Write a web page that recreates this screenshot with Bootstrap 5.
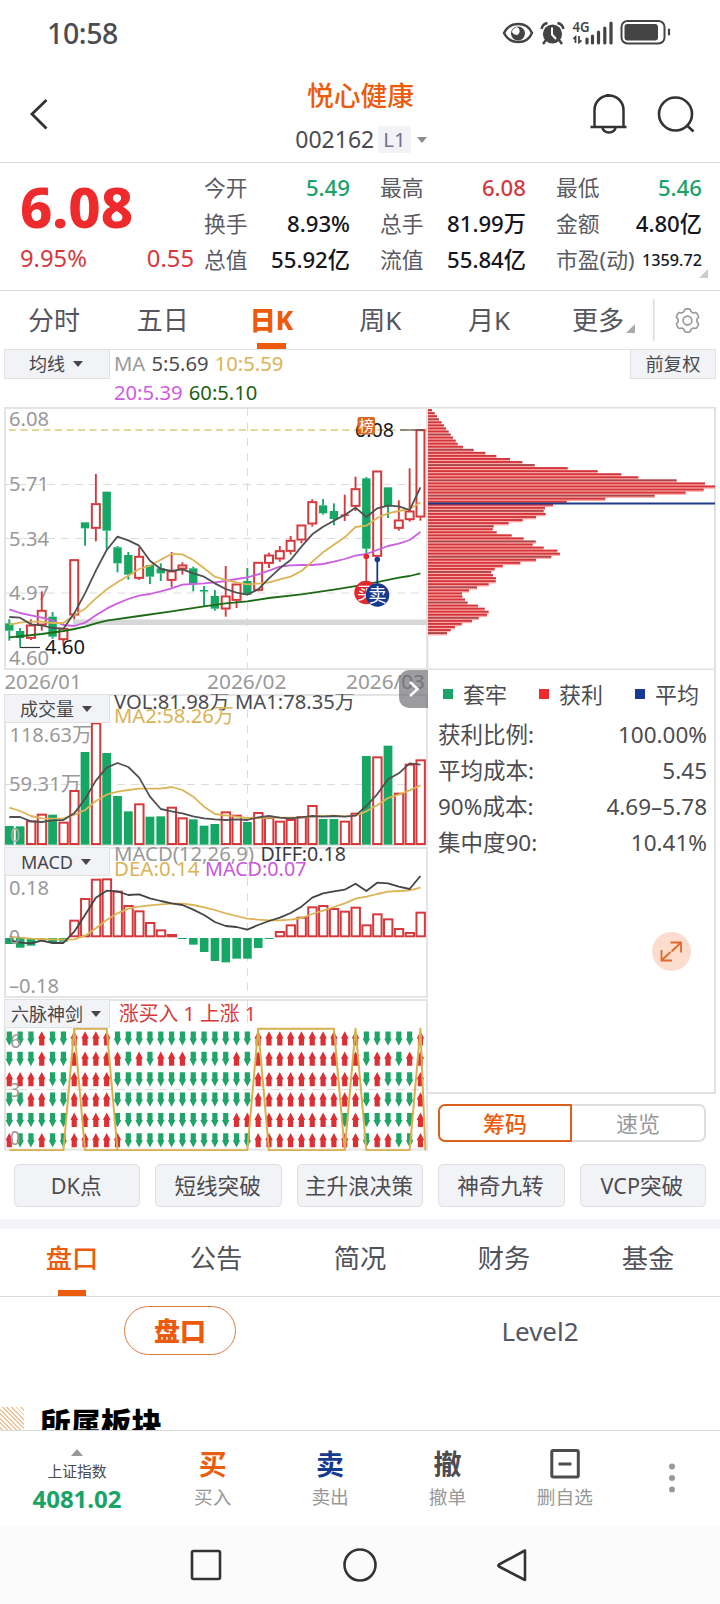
<!DOCTYPE html>
<html lang="zh-CN">
<head>
<meta charset="utf-8">
<meta name="viewport" content="width=device-width, initial-scale=1">
<title>悦心健康 002162</title>
<link href="https://cdn.jsdelivr.net/npm/bootstrap@5.3.0/dist/css/bootstrap.min.css" rel="stylesheet">
<script src="https://cdn.jsdelivr.net/npm/bootstrap@5.3.0/dist/js/bootstrap.bundle.min.js"></script>
<style>
:root{--brand:#ec5b0b;--up:#d6393c;--down:#19a366;--rule:#e1e1e1;--soft:#f2f3f7;--ink:#4c4c50}
body{font-family:"Noto Sans","Noto Sans CJK SC",sans-serif;color:var(--ink);background:#fff;line-height:1;width:720px;height:1604px;overflow:hidden}
svg{display:block}
svg text{font-family:"Noto Sans","Noto Sans CJK SC",sans-serif}
.c-brand{color:var(--brand)}.c-up{color:var(--up)}.c-down{color:var(--down)}
.line-b{border-bottom:1px solid #dadada}
.status{height:66px;padding:0 48px 0 47px}
.clock{font-size:28.5px;font-weight:500;letter-spacing:-.4px}
.head{height:97px;padding:0 24px 0 28px}
.stock-name{font-size:26.8px;font-weight:500;margin:1px 3px 0 0}
.stock-code{font-size:23px;height:28px;margin-top:16px;margin-left:-2px}
.lvl{background:var(--soft);color:#76728f;font-size:20.5px;padding:3px 5px;margin-left:4px;height:27px;border-radius:2px}
.caret{width:0;height:0;border:5.5px solid transparent;border-top:6px solid #8b8b8b;border-bottom:0}
.stock-code .caret{margin-left:6px}
.quote{height:128px;position:relative}
.price-box{width:204px;padding:19px 0 0 20px}
.price{font-size:56px;font-weight:800;color:#ee2a2c;line-height:48px}
.chg{font-size:23.8px;margin-top:17px;width:174px}
.qcol{width:145px;margin-right:31px;padding-top:7px}
.qcol>div{height:36px;font-size:21.8px;color:#5b5b63}
.qcol b{font-weight:500;color:#16161e;font-size:22.2px;margin-right:-1px}
.qcol b.c-down{color:var(--down)}.qcol b.c-up{color:var(--up)}
.qcol b.pe{font-size:16.2px}
.corner{position:absolute;right:12px;bottom:12px}
.periods{height:58px;font-size:26px;color:#55565e}
.periods>.tabx{width:108.8px;height:58px;position:relative;padding-right:1px}
.tabx.on:after,.info>.on:after{content:"";position:absolute;bottom:0;width:29px;height:6px;background:var(--brand);left:50%;margin-left:-14.5px}
.tabx.on{color:var(--brand);font-weight:800}
.more-mark{position:absolute;right:18px;bottom:16px}
.chart-zone{margin:0 4px;height:801px}
.ma-bar{height:58px;border-top:1.5px solid var(--rule)}
.ind{width:106px;height:29px;background:var(--soft);border:1.5px solid var(--rule);font-size:18px;color:#46464c;padding-right:2px}
.ind .caret{border-top-color:#46464c;margin-left:8px;border-width:6px 5.5px 0}
.panelx{position:relative}
.panelx>.ind{position:absolute;left:0;top:0}
.ma{font-size:20.2px;line-height:29px;margin:-1px 0 0 4px;word-spacing:1px}
.adj{height:29px;width:86px;background:var(--soft);border:1.5px solid var(--rule);border-top:0;font-size:18.3px}
.left-col{width:424px}.right-col{width:288px;height:687px;border-right:2px solid var(--rule);border-bottom:2px solid var(--rule)}
.expander{position:absolute;right:0;top:263px;width:29px;height:38px;border-radius:10px 0 0 10px;background:rgba(98,99,106,.64);z-index:2}
.legendx{height:47px;padding:0 15px 0 15px;font-size:22px}
.sw{width:10px;height:10px;margin-right:10px}
.kv{height:36px;padding:0 7px 0 10px;font-size:22.5px}
.zoomer{width:39px;height:39px;border-radius:50%;background:#fcdccd;margin:71px 0 0 224px}
.toggle{margin:10px 10px 0 10px;font-size:22px}
.toggle>div{height:38px;border:2px solid #dedede}
.toggle .a{width:134px;border:2px solid #d9621f;border-radius:7px 0 0 7px;color:var(--brand);font-weight:500}
.toggle .b{width:134px;border-left:0;border-radius:0 7px 7px 0;color:#999}
.strategies{height:69px;gap:15px;padding:14px 14px 12px}
.strategies>div{height:43px;background:var(--soft);border:1.5px solid #dfdfe2;border-radius:5px;font-size:21.6px;flex:1 1 0;white-space:nowrap;padding-right:2px}
.band{height:10px;background:var(--soft)}
.info{height:68px;font-size:26.3px;color:#515259}
.info>div{height:58px;position:relative}
.info>.on:after{bottom:-9px;width:28px;margin-left:-14px}
.pill{width:112px;height:49px;border:1.5px solid #e07a42;border-radius:25px;font-size:26px;font-weight:800;color:var(--brand)}
.level{font-size:26px;color:#55565e}
.sector{height:24px;margin-top:52px;overflow:hidden;border-bottom:1px solid #dadada}
.hatch{width:24px;height:24px;background:repeating-linear-gradient(45deg,#fff 0 2px,#efc49a 2px 3.2px)}
.sector h2{font-size:30.5px;font-weight:900;color:#000;margin:1px 0 0 16px;line-height:30px;white-space:nowrap}
.trade{height:95px}
.trade .it{width:117.4px;padding-top:17px}
.trade .big{font-size:28px;font-weight:700;height:32px;line-height:32px}
.trade .sub{font-size:18.7px;color:#989898;margin-top:8px}
.idx{width:154px;padding-top:18px}
.idx .nm{font-size:14.8px;margin-top:8px}.idx .vl{font-size:24px;margin-top:8px}
.sysnav{height:79px;background:#fbfbfb}
</style>
</head>
<body>
<div class="status d-flex align-items-center justify-content-between">
  <div class="clock">10:58</div>
  <svg width="172" height="28" viewBox="500 19 172 28">
    <path d="M504 33c6-12 23-12 28 0c-5 12-22 12-28 0z" fill="none" stroke="#444" stroke-width="2.4"/>
    <circle cx="518" cy="33.5" r="7" fill="#444"/><path d="M517 27c4 2 3 7 0 8c-2 0-4-1-5-3c0-2 2-4 5-5z" fill="#fff"/>
    <circle cx="552.5" cy="34" r="9.6" fill="#444"/><path d="M541.5 29q1-5 6-6M563.500 29q-1-5-6-6M546 40l-3 4M559 40l3 4" stroke="#444" stroke-width="2.5" fill="none"/><path d="M552 27.500v7l4 4.500" stroke="#fff" stroke-width="2" fill="none"/>
    <text x="572.500" y="32" font-size="14" font-weight="600" fill="#444" textLength="17" lengthAdjust="spacingAndGlyphs">4G</text>
    <path d="M575.500 43v-6l-2 2M579 36v6.500l2.500-2" stroke="#444" stroke-width="1.800" fill="none"/>
    <path d="M587 43v-4M592.500 43v-7M598.500 43v-11M604.800 43v-15M611 43v-20" stroke="#444" stroke-width="3.200" stroke-linecap="round"/>
    <rect x="621.500" y="21" width="43" height="22.500" rx="6" fill="none" stroke="#444" stroke-width="2"/><rect x="624.500" y="24" width="33.500" height="16.500" rx="3" fill="#444"/><path d="M669 29.500v5" stroke="#444" stroke-width="2.200" stroke-linecap="round"/>
  </svg>
</div>
<div class="head line-b d-flex justify-content-between">
  <svg class="flex-shrink-0" width="108" height="95" viewBox="28 66 108 95"><path d="M46.500 100L32 114l14.500 14.500" fill="none" stroke="#333" stroke-width="2.800"/></svg>
  <div class="d-flex flex-column align-items-center pt-3">
    <div class="stock-name c-brand">悦心健康</div>
    <div class="stock-code d-flex align-items-center">002162<span class="lvl">L1</span><i class="caret"></i></div>
  </div>
  <svg class="flex-shrink-0" width="108" height="95" viewBox="588 66 108 95" fill="none" stroke="#333" stroke-width="2.600">
    <path d="M594.500 127v-17a14.500 14.500 0 0 1 29 0v17M590.500 127h36M602.500 127.500a6.500 5 0 0 0 13 0M609 94v3" stroke-width="2.500"/><path d="M608 94v2" stroke-width="4"/>
    <circle cx="675.500" cy="114" r="16.500"/><path d="M686.500 125l7 6.500"/>
  </svg>
</div>
<div class="quote line-b d-flex">
  <div class="price-box flex-shrink-0"><div class="price">6.08</div><div class="chg c-up d-flex justify-content-between"><span>9.95%</span><span>0.55</span></div></div>
  <div class="qcol flex-shrink-0"><div class="d-flex justify-content-between align-items-center">今开<b class="c-down">5.49</b></div><div class="d-flex justify-content-between align-items-center">换手<b>8.93%</b></div><div class="d-flex justify-content-between align-items-center">总值<b>55.92亿</b></div></div>
  <div class="qcol flex-shrink-0"><div class="d-flex justify-content-between align-items-center">最高<b class="c-up">6.08</b></div><div class="d-flex justify-content-between align-items-center">总手<b>81.99万</b></div><div class="d-flex justify-content-between align-items-center">流值<b>55.84亿</b></div></div>
  <div class="qcol flex-shrink-0 me-0"><div class="d-flex justify-content-between align-items-center">最低<b class="c-down">5.46</b></div><div class="d-flex justify-content-between align-items-center">金额<b>4.80亿</b></div><div class="d-flex justify-content-between align-items-center">市盈(动)<b class="pe">1359.72</b></div></div>
  <svg class="corner" width="9" height="9"><path d="M9 0v9H0z" fill="#ccc"/></svg>
</div>
<div class="periods d-flex">
  <div class="tabx d-flex align-items-center justify-content-center">分时</div><div class="tabx d-flex align-items-center justify-content-center">五日</div><div class="tabx on d-flex align-items-center justify-content-center">日K</div><div class="tabx d-flex align-items-center justify-content-center">周K</div><div class="tabx d-flex align-items-center justify-content-center">月K</div>
  <div class="tabx d-flex align-items-center justify-content-center">更多<svg class="more-mark" width="9" height="9"><path d="M9 0v9H0z" fill="#aaa"/></svg></div>
  <svg width="66" height="58" viewBox="653 291 66 58" fill="none" stroke="#999" stroke-width="1.600"><path d="M653.800 299v42" stroke="#ddd"/><circle cx="687.500" cy="320.500" r="4.400"/><path id="gear" stroke-linejoin="round"/></svg>
</div>
<div class="chart-zone">
  <div class="ma-bar d-flex">
    <div class="ind border-top-0 d-flex align-items-center justify-content-center">均线<i class="caret"></i></div>
    <div class="ma flex-grow-1"><span style="color:#999">MA</span> 5:5.69 <span style="color:#dab358">10:5.59</span><br><span style="color:#cf5be0">20:5.39</span> <span style="color:#1c5f12">60:5.10</span></div>
    <div class="adj d-flex align-items-center justify-content-center">前复权</div>
  </div>
  <div class="d-flex">
    <div class="left-col">
      <div class="panelx"><svg id="k" width="424" height="287" viewBox="4 407 424 287"></svg>
        <div class="expander d-flex align-items-center justify-content-center"><svg width="12" height="18"><path d="M2 2l7.500 7L2 16" stroke="#fff" stroke-width="2.500" fill="none"/></svg></div></div>
      <div class="panelx"><svg id="vol" width="424" height="153" viewBox="4 694 424 153"></svg><div class="ind d-flex align-items-center justify-content-center">成交量<i class="caret"></i></div></div>
      <div class="panelx"><svg id="macd" width="424" height="152" viewBox="4 847 424 152"></svg><div class="ind d-flex align-items-center justify-content-center">MACD<i class="caret"></i></div></div>
      <div class="panelx"><svg id="six" width="424" height="152" viewBox="4 999 424 152"></svg><div class="ind d-flex align-items-center justify-content-center">六脉神剑<i class="caret"></i></div></div>
    </div>
    <div>
      <div class="right-col">
        <svg id="chips" width="288" height="263" viewBox="428 407 288 263"></svg>
        <div class="legendx d-flex justify-content-between align-items-center">
          <span class="d-flex align-items-center"><i class="sw" style="background:#19a366"></i>套牢</span><span class="d-flex align-items-center"><i class="sw" style="background:#ee2a2c"></i>获利</span><span class="d-flex align-items-center"><i class="sw" style="background:#163a96"></i>平均</span>
        </div>
        <div class="kv d-flex justify-content-between align-items-center"><span>获利比例:</span><span>100.00%</span></div>
        <div class="kv d-flex justify-content-between align-items-center"><span>平均成本:</span><span>5.45</span></div>
        <div class="kv d-flex justify-content-between align-items-center"><span>90%成本:</span><span>4.69–5.78</span></div>
        <div class="kv d-flex justify-content-between align-items-center"><span>集中度90:</span><span>10.41%</span></div>
        <div class="zoomer"><svg width="39" height="39" fill="none" stroke="#e0692a" stroke-width="1.800"><path d="M18.500 10.500h10.500v10M28.500 11l-9 8.500M9.500 18v10.500h10.500M10 28l8.500-8"/></svg></div>
      </div>
      <div class="toggle d-flex"><div class="a d-flex align-items-center justify-content-center">筹码</div><div class="b d-flex align-items-center justify-content-center">速览</div></div>
    </div>
  </div>
</div>
<div class="strategies d-flex"><div class="d-flex align-items-center justify-content-center">DK点</div><div class="d-flex align-items-center justify-content-center">短线突破</div><div class="d-flex align-items-center justify-content-center">主升浪决策</div><div class="d-flex align-items-center justify-content-center">神奇九转</div><div class="d-flex align-items-center justify-content-center">VCP突破</div></div>
<div class="band"></div>
<div class="info line-b d-flex text-center"><div class="col on c-brand fw-medium d-flex align-items-center justify-content-center">盘口</div><div class="col d-flex align-items-center justify-content-center">公告</div><div class="col d-flex align-items-center justify-content-center">简况</div><div class="col d-flex align-items-center justify-content-center">财务</div><div class="col d-flex align-items-center justify-content-center">基金</div></div>
<div class="d-flex" style="padding-top:9px"><div class="w-50 d-flex justify-content-center"><div class="pill d-flex align-items-center justify-content-center">盘口</div></div><div class="level w-50 d-flex align-items-center justify-content-center">Level2</div></div>
<div class="sector d-flex"><div class="hatch"></div><h2>所属板块</h2></div>
<div class="trade d-flex">
  <div class="idx d-flex flex-column align-items-center"><svg width="12" height="7"><path d="M6 0l6 7H0z" fill="#999"/></svg><div class="nm">上证指数</div><div class="vl c-down fw-bold">4081.02</div></div>
  <div class="it text-center"><div class="big" style="color:#e8600f">买</div><div class="sub">买入</div></div>
  <div class="it text-center"><div class="big" style="color:#163a8e">卖</div><div class="sub">卖出</div></div>
  <div class="it text-center"><div class="big">撤</div><div class="sub">撤单</div></div>
  <div class="it text-center"><div class="big d-flex justify-content-center"><svg width="30" height="32" fill="none" stroke="#4c4c50"><rect x="1.800" y="2.500" width="26.500" height="26.500" rx="1.500" stroke-width="3"/><path d="M8.500 16h13" stroke-width="3"/></svg></div><div class="sub">删自选</div></div>
  <svg width="95" height="95" viewBox="624 1431 95 95" fill="#999"><circle cx="672" cy="1466.500" r="3"/><circle cx="672" cy="1478" r="3"/><circle cx="672" cy="1489.500" r="3"/></svg>
</div>
<div class="sysnav"><svg width="720" height="79" viewBox="0 1526 720 79" fill="none" stroke="#333" stroke-width="2.600"><rect x="192" y="1551" width="28" height="28" rx="1.500"/><circle cx="360" cy="1565" r="15.500"/><path d="M525 1550.500v29.500L499 1566.500q-1.500-1 0-2z" stroke-linejoin="round"/></svg></div>
<script>
const RED='#d6393c',GREEN='#16a765',GRID='#dcdcdc',X=i=>9.3+i*10.82;
const $=id=>document.getElementById(id);
const rect=(x,y,w,h,f,s)=>`<rect x="${x}" y="${y}" width="${w}" height="${h}" fill="${f}"${s?` stroke="${s}" stroke-width="2"`:''}/>`;
const seg=(x1,y1,x2,y2,c,w,d)=>`<path d="M${x1} ${y1}L${x2} ${y2}" stroke="${c}" stroke-width="${w||1}"${d?' stroke-dasharray="'+d+'"':''} fill="none"/>`;
const txt=(x,x2,y,s,c,z)=>`<text x="${x}" y="${y}" font-size="${z||20}" fill="${c}"${x2?` textLength="${x2-x}" lengthAdjust="spacingAndGlyphs"`:''}>${s}</text>`;
const poly=(a,o,c,w)=>`<polyline fill="none" stroke="${c}" stroke-width="${w||1.8}" stroke-linejoin="round" points="${a.map(p=>X(p[0])+','+(o+p[1]/3)).join(' ')}"/>`;
const line=(a,o,c)=>poly(a.map((v,i)=>[i,v]),o,c);
const G='#999';
/* candles: direction, body top, body bottom, high, low in thirds of a pixel below y=400 */
const K=[[0,670,692,658,722],[0,693,714,684,742],[1,674,716,658,720],[1,630,676,574,692],[0,650,710,636,716],[1,684,720,684,738],[1,478,646,478,658],[0,367,385,367,437],[1,310,386,222,424],[0,275,392,275,448],[0,442,490,438,517],[0,465,524,456,539],[1,468,536,442,540],[0,495,530,495,552],[0,505,520,490,543],[1,512,542,456,562],[1,494,508,487,524],[0,505,552,500,574],[0,570,573,558,620],[0,588,626,570,632],[1,587,628,498,650],[1,551,602,551,624],[0,543,584,504,584],[1,486,572,486,574],[1,464,491,458,504],[1,451,478,438,485],[1,420,455,408,464],[1,374,421,374,430],[1,304,373,298,380],[0,316,340,297,344],[0,333,357,310,376],[1,343,347,284,363],[1,265,320,230,333],[0,235,446,231,460],[1,212,470,212,470],[0,262,318,262,354],[1,359,386,301,392],[1,332,360,205,365],[1,88,352,88,362]];
let s=rect(5,408,422,261,'none','#e4e4e4')+[484.5,538.5,593].map(y=>seg(5,y,427,y,GRID,1,'8 6')).join('')+seg(247.5,408,247.5,669,GRID,1,'8 7')+seg(9,430,427,430,'#e3d79a',1.8,'7 4.500');
s+=rect(73,619.5,355,5.5,'#d8d8d8');
s+=[['6.08',426],['5.71',491],['5.34',545.5],['4.97',600],['4.60',665]].map(a=>txt(9,49,a[1],a[0],G)).join('');
K.forEach((k,i)=>{const x=X(i),t=400+k[1]/3,b=400+k[2]/3,h=400+k[3]/3,l=400+k[4]/3,c=k[0]?RED:GREEN;
 s+=seg(x,h,x,t,c,1.9)+seg(x,b,x,l,c,1.9)+(k[0]?(b-t<3?rect(x-4,t,8,1.6,c):rect(x-4,t+.8,8,b-t-1.6,'#fff',c)):rect(x-4.2,t,8.4,Math.max(b-t,1.5),c));});
s+=poly([[0,712],[3,702],[5,693],[6,687],[7,680],[8,670],[9,662],[12,648],[15,634],[18,619],[20,610],[22,604],[24,594],[27,583],[30,569],[33,553],[36,533],[37,528],[38,520]],400,'#1c6b14');
s+=line([628,639,646,653,662,675,678,668,646,626,610,597,587,582,574,565,554,552,550,547,543,537,532,523,512,500,496,495,495,492,485,477,467,462,450,438,431,420,396],400,'#cc5fe0');
s+=line([674,668,665,665,669,669,645,626,595,568,547,527,507,497,479,462,463,480,505,530,540,547,553,551,547,538,530,513,485,457,434,412,381,377,354,340,333,327,307],400,'#dcb456');
s+=line([651,653,673,676,684,686,640,580,512,450,410,421,437,482,507,513,508,520,530,550,567,578,584,568,535,505,480,440,403,380,362,345,323,351,325,317,319,330,262],400,'#505050');
s+=seg(20,647.5,40,647.5,'#333',1.2)+txt(45,85,654,'4.60','#16161e')+seg(400,430,424,430,'#555',1.2)+txt(355,394,437,'6.08','#16161e');
s+='<rect x="357.500" y="417" width="17.500" height="17.500" rx="2" fill="#dc6620"/>'+txt(359,374,431,'榜','#fff',15);
s+=seg(366.3,556,366.3,582,RED,1.8)+'<circle cx="366.300" cy="556.500" r="2.800" fill="#e22"/><circle cx="366" cy="592.500" r="11.700" fill="#e3292c"/>'+txt(357,375,599,'买','#fff',17);
s+=seg(377.3,559,377.3,585,'#163a8e',1.8)+'<circle cx="377.300" cy="559.500" r="2.800" fill="#163a8e"/><circle cx="377.500" cy="595" r="11.800" fill="#163a8e"/>'+txt(368.5,386.5,601.5,'卖','#fff',18);
s+=txt(4.5,81.5,689,'2026/01',G)+txt(207,286.5,689,'2026/02',G)+txt(346,425,689,'2026/03',G);
$('k').innerHTML=s;
/* volume */
const V=[498,499,484,464,464,488,393,276,190,279,408,454,433,470,469,443,475,478,497,492,457,467,486,459,474,485,480,471,438,477,477,485,461,288,292,257,401,314,301];
const VR=[2,3,5,6,8,12,15,16,20,21,23,24,25,26,27,28,31,32,34,36,37,38];
s=rect(5,695,422,150,'none','#e4e4e4')+seg(5,784.5,427,784.5,GRID,1,'8 6')+seg(247.5,695,247.5,845,GRID,1,'8 7')+txt(9.5,92,742,'118.63万',G)+txt(9,81,791,'59.31万',G);
V.forEach((v,i)=>{const t=660+v/3,x=X(i);s+=VR.includes(i)?rect(x-4,t,8.4,844-t,'#fff',RED):rect(x-4.4,t,8.8,844.6-t,GREEN)});
s+=line([443,453,468,475,476,475,465,450,423,404,395,390,386,386,386,381,390,410,440,462,466,470,474,474,473,473,473,473,470,468,467,469,467,454,436,414,404,391,376],660,'#dcb456')+line([471,471,484,486,481,480,460,417,362,323,309,321,353,410,447,454,460,469,475,478,480,478,480,472,468,473,475,472,468,470,468,470,467,438,403,358,340,310,314],660,'#505050');
s+=txt(10,20,842,'0','#aaa')+txt(114,229.5,709,'VOL:81.98万','#4c4c50')+txt(235,355,709,'MA1:78.35万','#4c4c50')+txt(114,234,723,'MA2:58.26万','#dab358');
$('vol').innerHTML=s;
/* MACD */
const M=[312,323,317,302,307,305,242,177,119,118,155,198,214,249,271,285,293,314,336,363,367,356,356,324,297,276,256,233,202,198,207,215,203,256,223,238,267,279,218];
s=rect(5,848,422,149,'none','#e4e4e4')+seg(247.5,848,247.5,997,GRID,1,'8 7');
M.forEach((v,i)=>{const x=X(i),y=840+v/3;s+=v<291?rect(x-4,y,8.4,Math.max(936.3-y,.5),'#fff',RED):rect(x-4.2,938,8.6,Math.max(y-938,1),GREEN)});
s+=line([290,293,296,297,298,299,298,287,265,240,220,206,200,196,193,191,191,195,202,210,220,228,236,239,241,241,239,234,222,212,201,190,176,170,162,155,153,151,143],840,'#dcb456')+line([300,308,310,302,309,309,275,225,173,152,154,165,163,175,183,190,195,209,225,246,258,261,269,255,243,233,219,200,173,160,154,149,131,153,128,130,140,147,108],840,'#444');
s+=txt(9,49,895,'0.18',G)+txt(9,20,944,'0',G)+txt(9,59,993,'–0.18',G)+txt(114,254,861,'MACD(12,26,9)',G)+txt(260.5,346,861,'DIFF:0.18','#3c3c40')+txt(114,199.5,876,'DEA:0.14','#dab358')+txt(205,306.5,876,'MACD:0.07','#c858dc');
$('macd').innerHTML=s;
/* six-signal matrix */
const d=n=>'D'.repeat(n),u=n=>'U'.repeat(n);
const R=['DDDUDD'+u(4)+d(13)+u(10)+d(5)+'U','DDDUDD'+u(4)+'UDUDUUUDDDDUD'+u(10)+'DUUDUU','UUUUDD'+u(4)+d(13)+u(10)+'DUDDDU','DDUUDD'+u(4)+d(13)+u(10)+'DUDDDU',d(6)+u(4)+d(11)+'UU'+u(8)+'DU'+d(5)+'U','UDDUDD'+u(5)+d(12)+u(10)+'DUUDDU'];
s=rect(5,1000,422,149.5,'none','#e4e4e4')+seg(5,1089.5,427,1089.5,GRID,1,'8 6')+seg(247.5,1000,247.5,1028,GRID,1,'8 7');
R.forEach((r,j)=>{const y=1038.5+j*20.35;[...r].forEach((c,i)=>{const k=c=='U'?1:-1;s+=`<path transform="translate(${X(i)} ${y}) scale(1 ${k})" d="M0-7.300L3.800 0H2.600V7H-2.600V0H-3.800Z" fill="${k>0?'#dc3034':'#1fa568'}"/>`})});
s+=txt(10,21,1048,'6',G)+txt(10,20,1097,'3',G)+txt(10,20,1145,'0',G);
const B=481,T=116;
const gold=a=>poly(a,990,'#d9b04e',2);
s+=gold([[0,B],[5,B],[6,T],[9,T],[10,B]])+gold([[6,T],[7,B],[22,B],[23,T],[30,T],[31,B],[32,T],[33,B],[37,B],[38,T],[38.45,B]])+gold([[23,T],[24,B],[31,B]]);
s+=txt(119,256,1020.5,'涨买入 1 上涨 1',RED);
$('six').innerHTML=s;
/* chip distribution */
const C=[36,44,51,57,65,72,78,86,92,99,107,113,129,161,196,229,270,307,344,443,533,604,655,770,855,885,851,797,704,556,440,399,375,371,377,348,308,266,221,218,230,275,311,347,338,371,412,420,394,348,301,248,224,214,219,228,227,206,171,147,126,127,135,143,174,194,206,201,176,156,125,105,92,81];
s=rect(427.5,407,287.5,1.5,'#e1e1e1')+rect(427.5,668.5,287.5,1.5,'#e1e1e1')+rect(427.5,407,1,262,'#e1e1e1');
C.forEach((v,i)=>{const y=410+i*3.055,w=v/3-8;s+=rect(428,y-.6,w,3,'#ffaaa8')+rect(428,y-.9,w,1.9,i%5==3?'#a9474b':'#d2363b')});
s+=seg(428,503.4,715,503.4,'#203a86',2);
$('chips').innerHTML=s;
/* settings gear outline */
let g='';for(let i=0;i<72;i++){const a=i/72*2*Math.PI,r=10.5+1.2*Math.tanh(3*(Math.cos(6*a+Math.PI)+.25));g+=(i?'L':'M')+(687.5+r*Math.cos(a)).toFixed(2)+' '+(320.5+r*Math.sin(a)).toFixed(2)}
$('gear').setAttribute('d',g+'Z');
</script>
</body>
</html>
